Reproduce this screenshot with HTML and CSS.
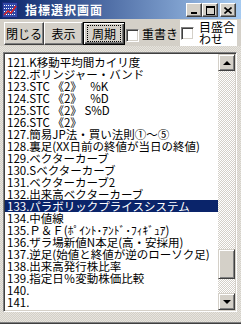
FILE: index.html
```html
<!DOCTYPE html>
<html lang="ja">
<head>
    <meta charset="UTF-8" />
    <title>指標選択画面</title>
    <link rel="stylesheet" href="styles.css">
</head>
<body>
<div class="window">
    <div class="titlebar">
        <svg class="app-icon" width="16" height="16" viewBox="0 0 16 16">
            <rect x="0" y="0" width="16" height="16" fill="#1c2a78"/>
            <rect x="1" y="1" width="14" height="14" fill="#3048a8"/>
            <path d="M2 3.5h12M2 6.5h12M2 9.5h12M2 12.5h12" stroke="#fff" stroke-dasharray="1 1"/>
            <polyline points="2,13 6,9 9,11 14,4" fill="none" stroke="#e02020" stroke-width="1.5"/>
        </svg>
        <span class="title">指標選択画面</span>
        <div class="caption-btns">
            <span class="cap-btn">
                <svg width="8" height="8" viewBox="0 0 8 8"><rect x="1" y="6" width="6" height="2" fill="#000"/></svg>
            </span>
            <span class="cap-btn">
                <svg width="9" height="9" viewBox="0 0 9 9"><rect x="0.5" y="0.5" width="8" height="8" fill="none" stroke="#000"/><rect x="0" y="0" width="9" height="2" fill="#000"/></svg>
            </span>
            <span class="cap-btn cap-close">
                <svg width="8" height="7" viewBox="0 0 8 7"><path d="M0.5 0.5l7 6M7.5 0.5l-7 6" stroke="#000" stroke-width="1.6"/></svg>
            </span>
        </div>
    </div>

    <div class="toolbar">
        <button class="btn btn-fechar">閉じる</button>
        <button class="btn btn-mostrar">表示</button>
        <button class="btn btn-default"><span class="focus">周期</span></button>
        <span class="checkbox check-first"></span>
        <span class="check-label">重書き</span>
        <div class="check-wide">
            <span class="checkbox"></span>
            <span class="wide-label">目盛合わせ</span>
        </div>
    </div>

    <div class="listbox">
        <ul class="items">
            <li>121.K移動平均間カイリ度</li>
            <li>122.ボリンジャー・バンド</li>
            <li>123.STC 《2》　 %K</li>
            <li>124.STC 《2》　 %D</li>
            <li>125.STC 《2》 S%D</li>
            <li>126.STC 《2》</li>
            <li>127.簡易JP法・買い法則①～⑤</li>
            <li>128.裏足(XX日前の終値が当日の終値)</li>
            <li>129.ベクターカーブ</li>
            <li>130.Sベクターカーブ</li>
            <li>131.ベクターカーブ2</li>
            <li>132.出来高ベクターカーブ</li>
            <li class="selected">133.パラボリックプライスシステム</li>
            <li>134.中値線</li>
            <li>135.Ｐ＆Ｆ(ﾎﾟｲﾝﾄ･ｱﾝﾄﾞ･ﾌｨｷﾞｭｱ)</li>
            <li>136.ザラ場新値N本足(高・安採用)</li>
            <li>137.逆足(始値と終値が逆のローソク足)</li>
            <li>138.出来高発行株比率</li>
            <li>139.指定日％変動株価比較</li>
            <li>140.</li>
            <li>141.</li>
        </ul>
        <div class="scrollbar">
            <span class="sb-btn"><span class="arrow-up"></span></span>
            <div class="track">
                <span class="thumb"></span>
            </div>
            <span class="sb-btn"><span class="arrow-down"></span></span>
        </div>
    </div>
</div>
</body>
</html>
```

FILE: styles.css
```css
body {
    margin: 0;
    padding: 0;
    font-family: "Noto Sans CJK JP", "Liberation Sans", sans-serif;
    font-size: 12px;
}

.window {
    width: 241px;
    height: 324px;
    box-sizing: border-box;
    display: flex;
    flex-direction: column;
    background: repeating-conic-gradient(#d4d0c8 0% 25%, #e6e4de 0% 50%) 0 0 / 2px 2px;
    border-bottom: 1px solid #404040;
    box-shadow: inset 0 -1px #808080;
}

.titlebar {
    height: 19px;
    display: flex;
    align-items: center;
    padding: 0 5px 0 2px;
    background: linear-gradient(to right, #0a246a, #a6caf0);
}

.app-icon {
    flex: none;
}

.title {
    margin-left: 7px;
    color: #fff;
    font-weight: bold;
    font-size: 12px;
    letter-spacing: 1px;
    line-height: 19px;
}

.caption-btns {
    margin-left: auto;
    display: flex;
    padding-top: 1px;
}

.cap-btn {
    width: 16px;
    height: 14px;
    box-sizing: border-box;
    display: flex;
    align-items: center;
    justify-content: center;
    background: #d4d0c8;
    border: 1px solid;
    border-color: #fff #404040 #404040 #fff;
    box-shadow: inset -1px -1px #808080;
}

.cap-close {
    margin-left: 2px;
}

.toolbar {
    height: 27px;
    box-sizing: border-box;
    display: flex;
    align-items: flex-start;
    padding: 3px 0 0 4px;
    background: #d4d0c8;
}

.btn {
    height: 23px;
    padding: 0;
    margin: 0;
    font-family: inherit;
    font-size: 12px;
    color: #000;
    background: #d4d0c8;
    border: 1px solid;
    border-color: #fff #404040 #404040 #fff;
    box-shadow: inset -1px -1px #808080;
    display: flex;
    align-items: center;
    justify-content: center;
}

.btn-fechar {
    width: 40px;
}

.btn-mostrar {
    width: 39px;
}

.btn-default {
    width: 42px;
    border: 1px solid #000;
    box-shadow: inset 1px 1px #fff, inset -1px -1px #404040, inset -2px -2px #808080;
}

.focus {
    display: block;
    width: 32px;
    height: 15px;
    line-height: 15px;
    border: 1px dotted #000;
}

.checkbox {
    width: 13px;
    height: 13px;
    box-sizing: border-box;
    flex: none;
    background: #fff;
    border: 1px solid;
    border-color: #808080 #fff #fff #808080;
    box-shadow: inset 1px 1px #404040, inset -1px -1px #d4d0c8;
}

.check-first {
    margin: 7px 0 0 1px;
}

.check-label {
    margin: 5px 0 0 3px;
    line-height: 14px;
}

.check-wide {
    margin: -2px 0 0 2px;
    width: 57px;
    height: 26px;
    background: #fff;
    display: flex;
    align-items: center;
    padding-left: 1px;
    box-sizing: border-box;
}

.wide-label {
    width: 37px;
    margin-left: 5px;
    line-height: 12px;
}

.listbox {
    margin: 6px 4px 0 3px;
    height: 260px;
    box-sizing: border-box;
    display: flex;
    background: #fff;
    border: 1px solid;
    border-color: #808080 #fff #fff #808080;
    box-shadow: inset 1px 1px #404040, inset -1px -1px #d4d0c8;
    padding: 1px;
}

.items {
    flex: 1;
    list-style: none;
    margin: 0;
    padding: 2px 0 0 0;
    overflow: hidden;
    font-size: 11.5px;
}

.items li {
    height: 12px;
    line-height: 12px;
    padding-left: 2px;
    white-space: nowrap;
}

.items li.selected {
    background: #0a246a;
    color: #fff;
}

.scrollbar {
    width: 17px;
    display: flex;
    flex-direction: column;
}

.sb-btn, .thumb {
    display: flex;
    align-items: center;
    justify-content: center;
    box-sizing: border-box;
    background: #d4d0c8;
    border: 1px solid;
    border-color: #d4d0c8 #404040 #404040 #d4d0c8;
    box-shadow: inset 1px 1px #fff, inset -1px -1px #808080;
}

.sb-btn {
    height: 17px;
}

.track {
    flex: 1;
    display: flex;
    flex-direction: column;
    justify-content: flex-end;
    padding-bottom: 14px;
    background: repeating-conic-gradient(#fff 0% 25%, #d4d0c8 0% 50%) 0 0 / 2px 2px;
}

.thumb {
    height: 30px;
}

.arrow-up {
    width: 0;
    height: 0;
    border-left: 4px solid transparent;
    border-right: 4px solid transparent;
    border-bottom: 4px solid #000;
}

.arrow-down {
    width: 0;
    height: 0;
    border-left: 4px solid transparent;
    border-right: 4px solid transparent;
    border-top: 4px solid #000;
}
```
